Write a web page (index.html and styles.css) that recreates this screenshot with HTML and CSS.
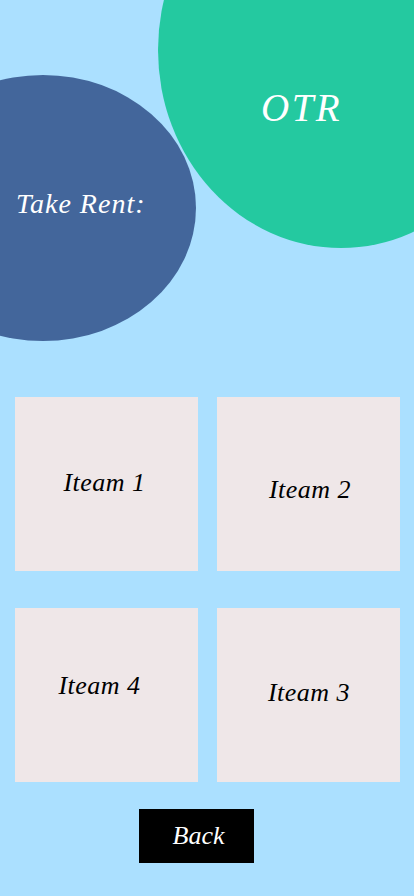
FILE: index.html
```html
<!DOCTYPE html>
<html lang="en">
<head>
<meta charset="utf-8">
<title>OTR</title>
<link rel="stylesheet" href="styles.css">
</head>
<body>
<div class="page">
  <header class="hero">
    <div class="blob blob--green"><span class="blob__title">OTR</span></div>
    <div class="blob blob--blue"><span class="blob__label">Take Rent:</span></div>
  </header>
  <main class="grid">
    <div class="item item--1"><span>Iteam 1</span></div>
    <div class="item item--2"><span>Iteam 2</span></div>
    <div class="item item--4"><span>Iteam 4</span></div>
    <div class="item item--3"><span>Iteam 3</span></div>
  </main>
  <div class="actions">
    <button class="back">Back</button>
  </div>
</div>
</body>
</html>
```

FILE: styles.css
```css
html, body {
  margin: 0;
  padding: 0;
  background: #abe0ff;
}
body {
  font-family: "Liberation Serif", "Times New Roman", serif;
  font-style: italic;
  overflow-x: hidden;
}
.page {
  width: 414px;
  min-height: 896px;
  overflow: hidden;
}
.hero {
  position: relative;
  height: 397px;
}
.blob {
  position: absolute;
  border-radius: 50%;
  color: #ffffff;
  box-sizing: border-box;
  line-height: 1;
}
.blob--green {
  left: 158px;
  top: -148px;
  width: 366px;
  height: 396px;
  background: #24c9a0;
  padding: 236px 0 0 103px;
}
.blob--blue {
  left: -110px;
  top: 75px;
  width: 306px;
  height: 266px;
  background: #43669b;
  padding: 115px 0 0 126px;
}
.blob__title {
  font-size: 39px;
  letter-spacing: 2.5px;
}
.blob__label {
  font-size: 28px;
  letter-spacing: 1px;
  white-space: nowrap;
}
.grid {
  display: grid;
  grid-template-columns: 183px 183px;
  column-gap: 19px;
  row-gap: 37px;
  padding: 0 0 0 15px;
}
.item {
  height: 174px;
  background: #efe7e8;
  display: flex;
  align-items: center;
  justify-content: center;
  box-sizing: border-box;
  font-size: 26px;
  letter-spacing: 0.5px;
  line-height: 1;
  color: #000;
}
.item--1 { padding: 0 4px 3px 0; }
.item--2 { padding: 11px 0 0 3px; }
.item--4 { padding: 0 14px 19px 0; }
.item--3 { padding: 0 0 5px 1px; }
.actions {
  padding: 27px 0 0 139px;
}
.back {
  width: 115px;
  height: 54px;
  background: #000;
  color: #fff;
  border: 0;
  margin: 0;
  padding: 0 0 0 4px;
  font-family: "Liberation Serif", "Times New Roman", serif;
  font-style: italic;
  font-size: 26px;
  line-height: 1;
}
```
